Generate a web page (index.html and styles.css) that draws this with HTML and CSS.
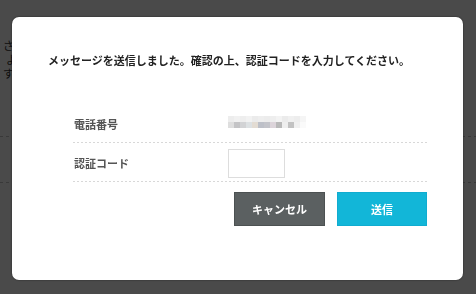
FILE: index.html
```html
<!DOCTYPE html>
<html lang="ja">
<head>
    <meta charset="UTF-8">
    <meta name="viewport" content="width=device-width, initial-scale=1.0">
    <title>認証コード入力</title>
    <link rel="stylesheet" href="styles.css">
</head>
<body>
    <div class="page">
        <p class="page-text">さ</p>
        <p class="page-text page-text-indent">よ</p>
        <p class="page-text">す</p>
        <div class="page-rule page-rule-first"></div>
        <div class="page-rule"></div>
    </div>

    <div class="overlay">
        <div class="modal">
            <p class="modal-message">メッセージを送信しました。確認の上、認証コードを入力してください。</p>
            <form class="verify-form">
                <div class="form-row">
                    <span class="form-label">電話番号</span>
                    <div class="mosaic">
                        <span style="background:#ededed"></span><span style="background:#f1f1f1"></span><span style="background:#eeeeee"></span><span style="background:#f2f2f2"></span><span style="background:#ebebeb"></span><span style="background:#eeeeee"></span><span style="background:#ececec"></span><span style="background:#eeeeee"></span><span style="background:#f3f3f3"></span><span style="background:#ebebeb"></span><span style="background:#f0f0f0"></span><span style="background:#ededed"></span><span style="background:#f5f5f5"></span>
                        <span style="background:#dedede"></span><span style="background:#c4c4c6"></span><span style="background:#d2d3d5"></span><span style="background:#dde1e3"></span><span style="background:#e3dcd3"></span><span style="background:#bdc0c8"></span><span style="background:#c3c4ca"></span><span style="background:#dcd4da"></span><span style="background:#b9b9b9"></span><span style="background:#eeeeee"></span><span style="background:#c2c2c2"></span><span style="background:#f0f0f0"></span><span style="background:#fafafa"></span>
                    </div>
                </div>
                <div class="form-row">
                    <label class="form-label" for="code">認証コード</label>
                    <input class="code-input" type="text" id="code" name="code">
                </div>
                <div class="form-actions">
                    <button type="button" class="btn btn-cancel">キャンセル</button>
                    <button type="submit" class="btn btn-send">送信</button>
                </div>
            </form>
        </div>
    </div>
</body>
</html>
```

FILE: styles.css
```css
/* page behind the dialog */
body {
    margin: 0;
    background: #fff;
    font-family: "Noto Sans CJK JP", "Noto Sans", sans-serif;
}

.page {
    height: 294px;
    padding-top: 38px;
    box-sizing: border-box;
}

.page-text {
    margin: 0 0 0 3px;
    font-size: 11px;
    line-height: 14px;
    color: #333;
}

.page-text-indent {
    margin-left: 6px;
}

.page-rule {
    height: 1px;
    margin-top: 45px;
    background-image: repeating-linear-gradient(to right, #c4c4c4 0 3px, transparent 3px 6px);
}

.page-rule-first {
    margin-top: 56px;
}

/* dialog */
.overlay {
    position: fixed;
    top: 0;
    left: 0;
    right: 0;
    bottom: 0;
    background: rgba(0, 0, 0, 0.71);
    padding: 17px 13px 14px 12px;
    display: flex;
}

.modal {
    flex: 1;
    background: #fff;
    border-radius: 7px;
    box-shadow: 0 0 2px rgba(0, 0, 0, 0.6);
    padding: 35px 36px 0 36px;
}

.modal-message {
    margin: 0;
    font-size: 11px;
    line-height: 16px;
    font-weight: 700;
    color: #222;
    white-space: nowrap;
}

.verify-form {
    margin: 36px 0 0 25px;
}

.form-row {
    display: flex;
    align-items: center;
    height: 39px;
    background-image: repeating-linear-gradient(to right, #d8d8d8 0 2px, transparent 2px 4px);
    background-size: 100% 1px;
    background-repeat: no-repeat;
    background-position: bottom;
}

.form-label {
    width: 154px;
    padding-left: 1px;
    font-size: 11px;
    font-weight: 700;
    color: #555;
}

.mosaic {
    display: grid;
    grid-template-columns: repeat(13, 6px);
    grid-auto-rows: 6px;
    margin-top: -4px;
}

.code-input {
    width: 57px;
    height: 29px;
    margin: 6px 0 0;
    box-sizing: border-box;
    border: 1px solid #ddd;
    align-self: flex-start;
}

.form-actions {
    display: flex;
    justify-content: flex-end;
    gap: 12px;
    margin-top: 10px;
}

.btn {
    height: 34px;
    border: 1px solid;
    font-family: inherit;
    font-size: 11px;
    font-weight: 700;
    color: #fff;
    cursor: pointer;
}

.btn-cancel {
    width: 91px;
    background: #5b6061;
    border-color: #4c5152;
}

.btn-send {
    width: 90px;
    background: #12b6d8;
    border-color: #10acd0;
}
```
